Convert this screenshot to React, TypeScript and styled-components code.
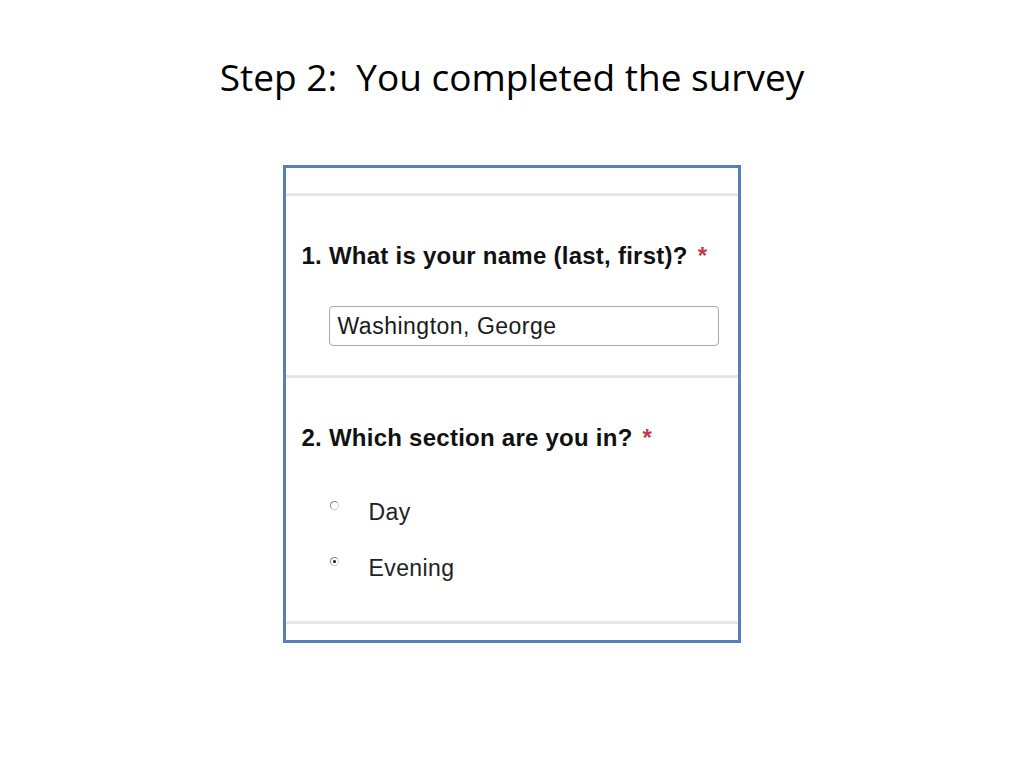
import React from "react";
import styled, { createGlobalStyle } from "styled-components";

const GlobalStyle = createGlobalStyle`
  html, body {
    margin: 0;
    padding: 0;
    background: #ffffff;
  }
`;

const Page = styled.div`
  width: 1024px;
  height: 768px;
  display: flex;
  flex-direction: column;
  align-items: center;
  background: #ffffff;
`;

const Title = styled.h1`
  margin: 52px 0 0;
  height: 50px;
  line-height: 50px;
  font-family: "Open Sans", "Liberation Sans", sans-serif;
  font-weight: 400;
  font-size: 37px;
  color: #000000;
  white-space: pre;
`;

const Panel = styled.div`
  margin: 63px 0 0 -1px;
  width: 452px;
  border: 3px solid #5a7fb8;
  background: #ffffff;
  display: flex;
  flex-direction: column;
`;

const Separator = styled.div<{ gapTop: number }>`
  margin-top: ${(p) => p.gapTop}px;
  height: 3px;
  background: #e6e6e6;
`;

const Section = styled.div<{ padTop: number; padBottom: number }>`
  padding: ${(p) => p.padTop}px 0 ${(p) => p.padBottom}px 16px;
  display: flex;
  flex-direction: column;
`;

const Question = styled.div`
  height: 24px;
  line-height: 24px;
  font-family: "Liberation Sans", Arial, sans-serif;
  font-weight: 700;
  font-size: 24px;
  letter-spacing: 0.25px;
  color: #111111;
  white-space: nowrap;
`;

const Required = styled.span`
  color: #c43b4c;
  margin-left: 10px;
`;

const TextBox = styled.div`
  margin: 38px 0 0 27px;
  width: 380px;
  height: 38px;
  border: 1px solid #a9a9a9;
  border-radius: 4px;
  box-sizing: content-box;
  display: flex;
  align-items: center;
  padding-left: 8px;
  font-family: "Liberation Sans", Arial, sans-serif;
  font-size: 23px;
  letter-spacing: 0.5px;
  color: #1a1a1a;
`;

const Options = styled.div`
  margin-top: 50px;
  display: flex;
  flex-direction: column;
  gap: 32px;
`;

const OptionRow = styled.div`
  display: flex;
  align-items: flex-start;
  height: 24px;
  padding-left: 28px;
`;

const Radio = styled.span<{ checked?: boolean }>`
  position: relative;
  width: 7px;
  height: 7px;
  margin-top: 1px;
  border-radius: 50%;
  border: 1px solid #8a8a8a;
  border-right-color: #d0d0d0;
  border-bottom-color: #c8c8c8;
  background: #ffffff;
  &::after {
    content: "";
    display: ${(p) => (p.checked ? "block" : "none")};
    position: absolute;
    left: 2px;
    top: 2px;
    width: 3px;
    height: 3px;
    border-radius: 50%;
    background: #111111;
  }
`;

const OptionLabel = styled.span`
  margin-left: 30px;
  line-height: 24px;
  font-family: "Liberation Sans", Arial, sans-serif;
  font-size: 23px;
  letter-spacing: 0.4px;
  color: #222222;
`;

const App: React.FC = () => (
  <Page>
    <GlobalStyle />
    <Title>{"Step 2:  You completed the survey"}</Title>
    <Panel>
      <Separator gapTop={25} />
      <Section padTop={48} padBottom={29}>
        <Question>
          1. What is your name (last, first)?<Required>*</Required>
        </Question>
        <TextBox>Washington, George</TextBox>
      </Section>
      <Separator gapTop={0} />
      <Section padTop={48} padBottom={41}>
        <Question>
          2. Which section are you in?<Required>*</Required>
        </Question>
        <Options>
          <OptionRow>
            <Radio />
            <OptionLabel>Day</OptionLabel>
          </OptionRow>
          <OptionRow>
            <Radio checked />
            <OptionLabel>Evening</OptionLabel>
          </OptionRow>
        </Options>
      </Section>
      <Separator gapTop={0} />
      <div style={{ height: 16 }} />
    </Panel>
  </Page>
);

export default App;
